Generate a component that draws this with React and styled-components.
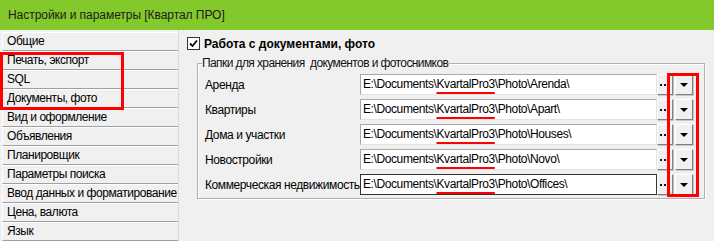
import React from 'react'
import styled, { createGlobalStyle } from 'styled-components'

const GlobalStyle = createGlobalStyle`
  body {
    margin: 0;
    background: #f0f0f0;
    font-family: "Liberation Sans", Arial, sans-serif;
    font-size: 12px;
    color: #000;
  }
`;

const Window = styled.div`
  position: relative;
  width: 714px;
  height: 241px;
  overflow: hidden;
  background: #f0f0f0;
`;

const TitleBar = styled.div`
  height: 30px;
  line-height: 30px;
  padding-left: 8px;
  background: #84c92b;
  color: #1b1b1b;
  font-size: 12px;
  letter-spacing: -0.05px;
`;

const Body = styled.div`
  display: flex;
`;

const Sidebar = styled.div`
  width: 178px;
  padding-top: 2px;
  border-right: 1px solid #dadada;
`;

const NavItem = styled.div`
  height: 17px;
  line-height: 17px;
  margin-left: 2px;
  padding-left: 4px;
  background: #f0f0f0;
  border-top: 1px solid #fff;
  border-left: 1px solid #fff;
  border-bottom: 1px solid #a0a0a0;
  white-space: nowrap;
  letter-spacing: -0.45px;
`;

const Main = styled.div`
  flex: 1;
  padding: 7px 0 0 8px;
`;

const CheckRow = styled.div`
  display: flex;
  align-items: center;
  gap: 4px;
  height: 13px;
  font-weight: bold;
`;

const CheckBox = styled.span`
  width: 11px;
  height: 11px;
  border: 1px solid #333;
  background: #fff;
  display: flex;
  align-items: center;
  justify-content: center;
`;

const Group = styled.fieldset`
  margin: 6px 9px 0 10px;
  padding: 4px 0 3px 7px;
  border: 1px solid #b0b0b0;
  box-shadow: inset 1px 1px 0 #fff, 1px 1px 0 #fff;
  min-width: 0;
`;

const Legend = styled.legend`
  padding: 0;
  margin-left: -3px;
  color: #101020;
  letter-spacing: -0.6px;
`;

const Rows = styled.div`
  display: flex;
  flex-direction: column;
  gap: 4px;
`;

const Row = styled.div`
  display: flex;
  align-items: center;
  height: 21px;
`;

const Label = styled.div`
  width: 155px;
  white-space: nowrap;
  letter-spacing: -0.4px;
`;

const PathBox = styled.div`
  width: 293px;
  height: 19px;
  line-height: 19px;
  padding-left: 2px;
  background: #fff;
  letter-spacing: -0.4px;
  border: 1px solid ${({ $focused }) => ($focused ? '#333' : '#a8a8a8')};
  border-right-color: ${({ $focused }) => ($focused ? '#333' : '#e3e3e3')};
  border-bottom-color: ${({ $focused }) => ($focused ? '#333' : '#e3e3e3')};
  white-space: nowrap;
  overflow: hidden;
`;

const Marked = styled.span`
  text-decoration: underline;
  text-decoration-color: #f00;
  text-decoration-thickness: 2px;
  text-underline-offset: 4px;
`;

const SmallButton = styled.div`
  width: ${({ $w }) => $w}px;
  height: 19px;
  margin-left: ${({ $gap }) => $gap}px;
  background: #f0f0f0;
  border: 1px solid;
  border-color: #fff #808080 #808080 #fff;
  box-shadow: 1px 1px 0 #c8c8c8;
  display: flex;
  align-items: center;
  justify-content: center;
`;

const Dots = styled.span`
  display: flex;
  gap: 2px;
  margin-right: 4px;
  & > i {
    width: 2px;
    height: 2px;
    background: #111;
  }
`;

const Arrow = styled.span`
  width: 0;
  height: 0;
  border-left: 4px solid transparent;
  border-right: 4px solid transparent;
  border-top: 4px solid #000;
`;

const RedBox = styled.div`
  position: absolute;
  border: 3px solid #f00;
  pointer-events: none;
`;

const navItems = [
  'Общие',
  'Печать, экспорт',
  'SQL',
  'Документы, фото',
  'Вид и оформление',
  'Объявления',
  'Планировщик',
  'Параметры поиска',
  'Ввод данных и форматирование',
  'Цена, валюта',
  'Язык',
];

const folders = [
  { label: 'Аренда', tail: 'Arenda' },
  { label: 'Квартиры', tail: 'Apart' },
  { label: 'Дома и участки', tail: 'Houses' },
  { label: 'Новостройки', tail: 'Novo' },
  { label: 'Коммерческая недвижимость', tail: 'Offices', focused: true },
];

export default function App() {
  return (
    <Window>
      <GlobalStyle />
      <TitleBar>Настройки и параметры [Квартал ПРО]</TitleBar>
      <Body>
        <Sidebar>
          {navItems.map((item) => (
            <NavItem key={item}>{item}</NavItem>
          ))}
        </Sidebar>
        <Main>
          <CheckRow>
            <CheckBox>
              <svg width="9" height="9" viewBox="0 0 9 9">
                <path d="M1 4.5 L3.5 7 L8 1.5" fill="none" stroke="#000" strokeWidth="1.8" />
              </svg>
            </CheckBox>
            Работа с документами, фото
          </CheckRow>
          <Group>
            <Legend>Папки для хранения&nbsp; документов и фотоснимков</Legend>
            <Rows>
              {folders.map((f) => (
                <Row key={f.label}>
                  <Label>{f.label}</Label>
                  <PathBox $focused={f.focused}>
                    E:\Documents\<Marked>KvartalPro3</Marked>\Photo\{f.tail}\
                  </PathBox>
                  <SmallButton $w={14} $gap={0}>
                    <Dots><i /><i /></Dots>
                  </SmallButton>
                  <SmallButton $w={16} $gap={2}>
                    <Arrow />
                  </SmallButton>
                </Row>
              ))}
            </Rows>
          </Group>
        </Main>
      </Body>
      <RedBox style={{ left: 0, top: 52, width: 118, height: 52 }} />
      <RedBox style={{ left: 667, top: 73, width: 26, height: 118 }} />
    </Window>
  )
}
